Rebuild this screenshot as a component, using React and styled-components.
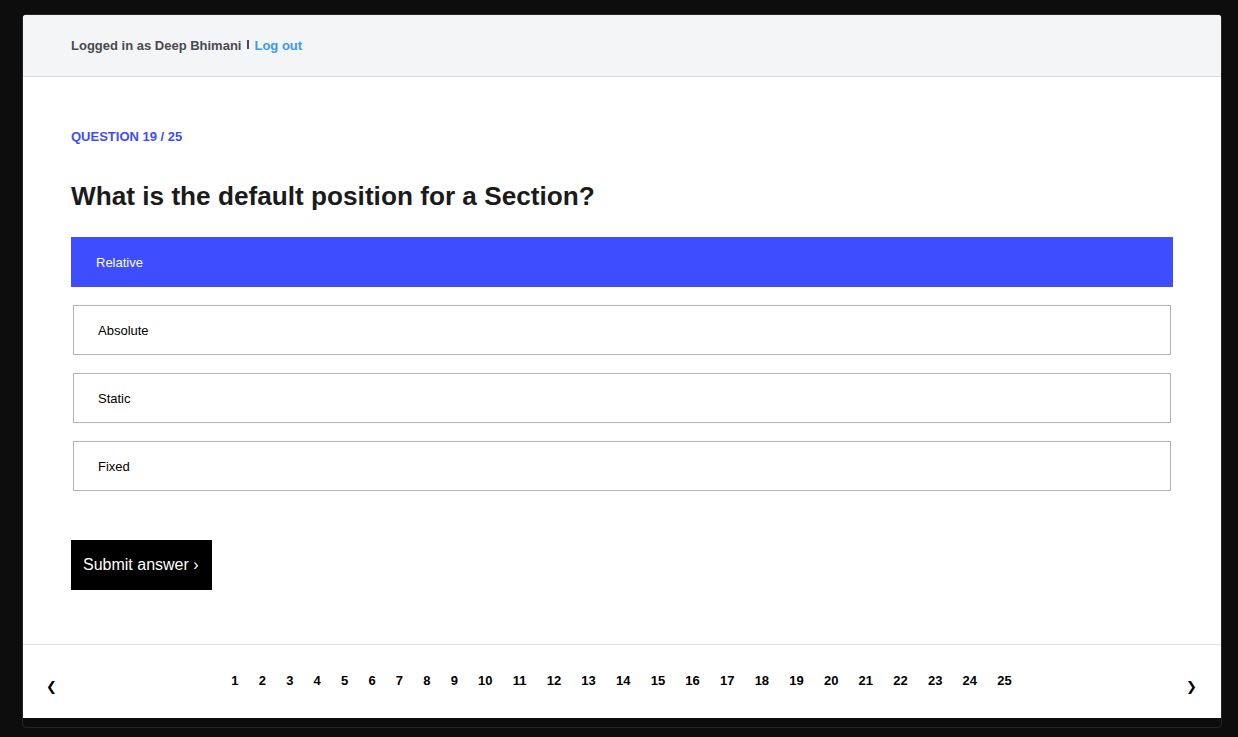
import React, { useState } from "react";
import styled, { createGlobalStyle } from "styled-components";

const Global = createGlobalStyle`
  html, body { margin: 0; padding: 0; background: #0d0d0d; }
  body { font-family: "Liberation Sans", Arial, sans-serif; }
  * { box-sizing: border-box; }
`;

const Stage = styled.div`
  padding: 14px 16px 9px 22px;
  height: 737px;
`;

const Window = styled.div`
  width: 1200px;
  height: 714px;
  border: 1px solid #262626;
  border-radius: 4px;
  background: #0d0d0d;
  overflow: hidden;
`;

const Panel = styled.div`
  height: 703px;
  background: #fff;
  display: flex;
  flex-direction: column;
`;

const Header = styled.header`
  height: 62px;
  flex: none;
  background: #f4f5f7;
  border-bottom: 1px solid #d9d9db;
  display: flex;
  align-items: center;
  padding: 0 48px;
  gap: 5px;
  font-size: 13px;
  font-weight: 700;
`;

const UserText = styled.span`
  color: #4a4a50;
`;

const Sep = styled.span`
  display: inline-block;
  width: 2px;
  height: 9px;
  background: #4a4a50;
  margin: 0 0 3px 1px;
`;

const LogOut = styled.a`
  color: #3a99f2;
  text-decoration: none;
  cursor: pointer;
`;

const Main = styled.main`
  flex: 1;
  padding: 52px 48px 0;
  display: flex;
  flex-direction: column;
`;

const Label = styled.div`
  color: #3d4cff;
  font-size: 13px;
  font-weight: 700;
  line-height: 16px;
  text-transform: uppercase;
`;

const Question = styled.h1`
  margin: 34px 0 0;
  font-size: 26.2px;
  line-height: 34px;
  font-weight: 700;
  color: #1b1b1b;
`;

const Options = styled.div`
  margin-top: 24px;
  display: flex;
  flex-direction: column;
  gap: 18px;
`;

const Option = styled.button`
  all: unset;
  box-sizing: border-box;
  height: 50px;
  display: flex;
  align-items: center;
  font-family: "Liberation Sans", Arial, sans-serif;
  font-size: 13px;
  cursor: pointer;
  ${(p) =>
    p.$selected
      ? `
    margin: 0;
    padding: 0 25px;
    background: #3d4dff;
    color: #fff;
  `
      : `
    margin: 0 2px;
    padding: 0 24px;
    background: #fff;
    color: #000;
    border: 1px solid #b4b4b4;
  `}
`;

const Submit = styled.button`
  all: unset;
  box-sizing: border-box;
  margin-top: 49px;
  align-self: flex-start;
  height: 50px;
  padding: 0 13px 0 12px;
  display: flex;
  align-items: center;
  background: #000;
  color: #fff;
  font-family: "Liberation Sans", Arial, sans-serif;
  font-size: 16px;
  cursor: pointer;
`;

const Footer = styled.footer`
  height: 74px;
  flex: none;
  border-top: 1px solid #dde3e8;
  display: flex;
  align-items: center;
  justify-content: space-between;
  padding: 0 24px 0 23px;
`;

const Arrow = styled.button`
  all: unset;
  font-family: "DejaVu Sans", sans-serif;
  font-size: 13px;
  font-weight: 700;
  color: #000;
  margin-top: 9px;
  cursor: pointer;
`;

const Pages = styled.nav`
  display: flex;
  align-items: center;
  margin-top: -2px;
`;

const PageNum = styled.a`
  padding: 0 10.1px;
  font-size: 13px;
  font-weight: 700;
  color: #000;
  cursor: pointer;
`;

const options = ["Relative", "Absolute", "Static", "Fixed"];

export default function App() {
  const [selected, setSelected] = useState(0);
  return (
    <>
      <Global />
      <Stage>
        <Window>
          <Panel>
            <Header>
              <UserText>Logged in as Deep Bhimani</UserText>
              <Sep />
              <LogOut>Log out</LogOut>
            </Header>
            <Main>
              <Label>Question 19 / 25</Label>
              <Question>What is the default position for a Section?</Question>
              <Options>
                {options.map((o, i) => (
                  <Option key={o} $selected={i === selected} onClick={() => setSelected(i)}>
                    {o}
                  </Option>
                ))}
              </Options>
              <Submit>Submit answer ›</Submit>
            </Main>
            <Footer>
              <Arrow>❮</Arrow>
              <Pages>
                {Array.from({ length: 25 }, (_, i) => (
                  <PageNum key={i}>{i + 1}</PageNum>
                ))}
              </Pages>
              <Arrow>❯</Arrow>
            </Footer>
          </Panel>
        </Window>
      </Stage>
    </>
  );
}
